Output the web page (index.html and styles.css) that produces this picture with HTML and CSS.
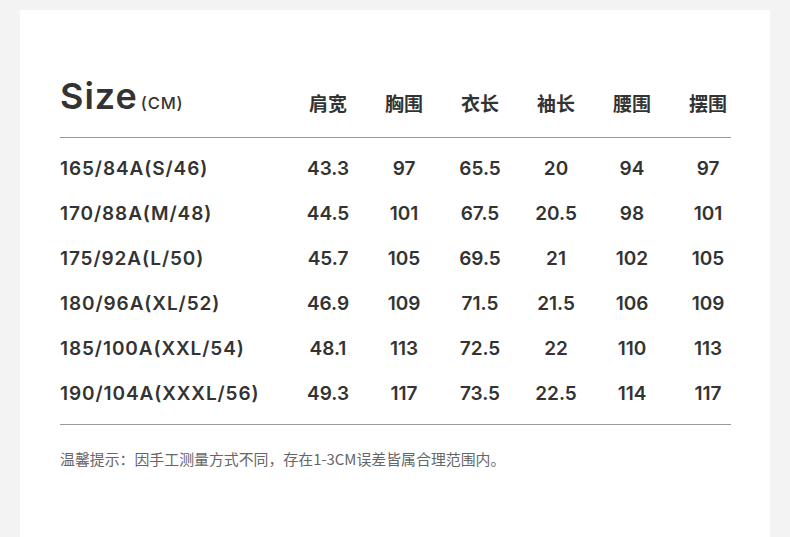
FILE: index.html
```html
<!DOCTYPE html>
<html lang="zh">
<head>
<meta charset="utf-8">
<link rel="stylesheet" href="styles.css">
</head>
<body>
<div class="card">
  <div class="row head">
    <div class="title"><span class="big">Size</span><span class="unit">(CM)</span></div>
    <div class="h">肩宽</div><div class="h">胸围</div><div class="h">衣长</div><div class="h">袖长</div><div class="h">腰围</div><div class="h">摆围</div>
  </div>
  <div class="rule"></div>
  <div class="body">
    <div class="row data"><div class="size">165/84A(S/46)</div><div>43.3</div><div>97</div><div>65.5</div><div>20</div><div>94</div><div>97</div></div>
    <div class="row data"><div class="size">170/88A(M/48)</div><div>44.5</div><div>101</div><div>67.5</div><div>20.5</div><div>98</div><div>101</div></div>
    <div class="row data"><div class="size">175/92A(L/50)</div><div>45.7</div><div>105</div><div>69.5</div><div>21</div><div>102</div><div>105</div></div>
    <div class="row data"><div class="size">180/96A(XL/52)</div><div>46.9</div><div>109</div><div>71.5</div><div>21.5</div><div>106</div><div>109</div></div>
    <div class="row data"><div class="size">185/100A(XXL/54)</div><div>48.1</div><div>113</div><div>72.5</div><div>22</div><div>110</div><div>113</div></div>
    <div class="row data"><div class="size">190/104A(XXXL/56)</div><div>49.3</div><div>117</div><div>73.5</div><div>22.5</div><div>114</div><div>117</div></div>
  </div>
  <div class="rule"></div>
  <p class="note">温馨提示：因手工测量方式不同，存在1-3CM误差皆属合理范围内。</p>
</div>
</body>
</html>
```
FILE: styles.css
```css
html, body { margin: 0; padding: 0; }
body {
  background: #f3f3f3;
  font-family: Inter, "Noto Sans CJK SC", sans-serif;
  color: #333;
  height: 537px;
  overflow: hidden;
}
.card {
  background: #fff;
  margin: 10px 20px 0 20px;
  padding: 66px 39px 0 40px;
  height: 461px;
}
.row {
  display: grid;
  grid-template-columns: 230px repeat(6, 76px);
  align-items: center;
}
.row > div:not(.title):not(.size) { text-align: center; }
.head { height: 61px; align-items: end; }
.title { display: flex; align-items: baseline; padding-bottom: 21px; }
.big {
  font-size: 36px;
  font-weight: 600;
  letter-spacing: 1px;
  line-height: 40px;
  color: #333;
}
.unit { font-size: 16.5px; font-weight: 500; margin-left: 3px; letter-spacing: 0.8px; }
.h {
  font-family: "Noto Sans CJK SC", sans-serif;
  font-size: 19px;
  font-weight: 700;
  line-height: 24px;
  padding-bottom: 22px;
}
.rule { height: 1px; background: #9a9a9a; width: 671px; }
.body { padding: 8px 0 8px; }
.data { height: 45px; font-size: 19px; font-weight: 600; }
.size { letter-spacing: 0.9px; }
.note {
  margin: 24px 0 0;
  font-family: "Noto Sans CJK SC", sans-serif;
  font-size: 14.9px;
  color: #666;
  line-height: 20px;
}
```
